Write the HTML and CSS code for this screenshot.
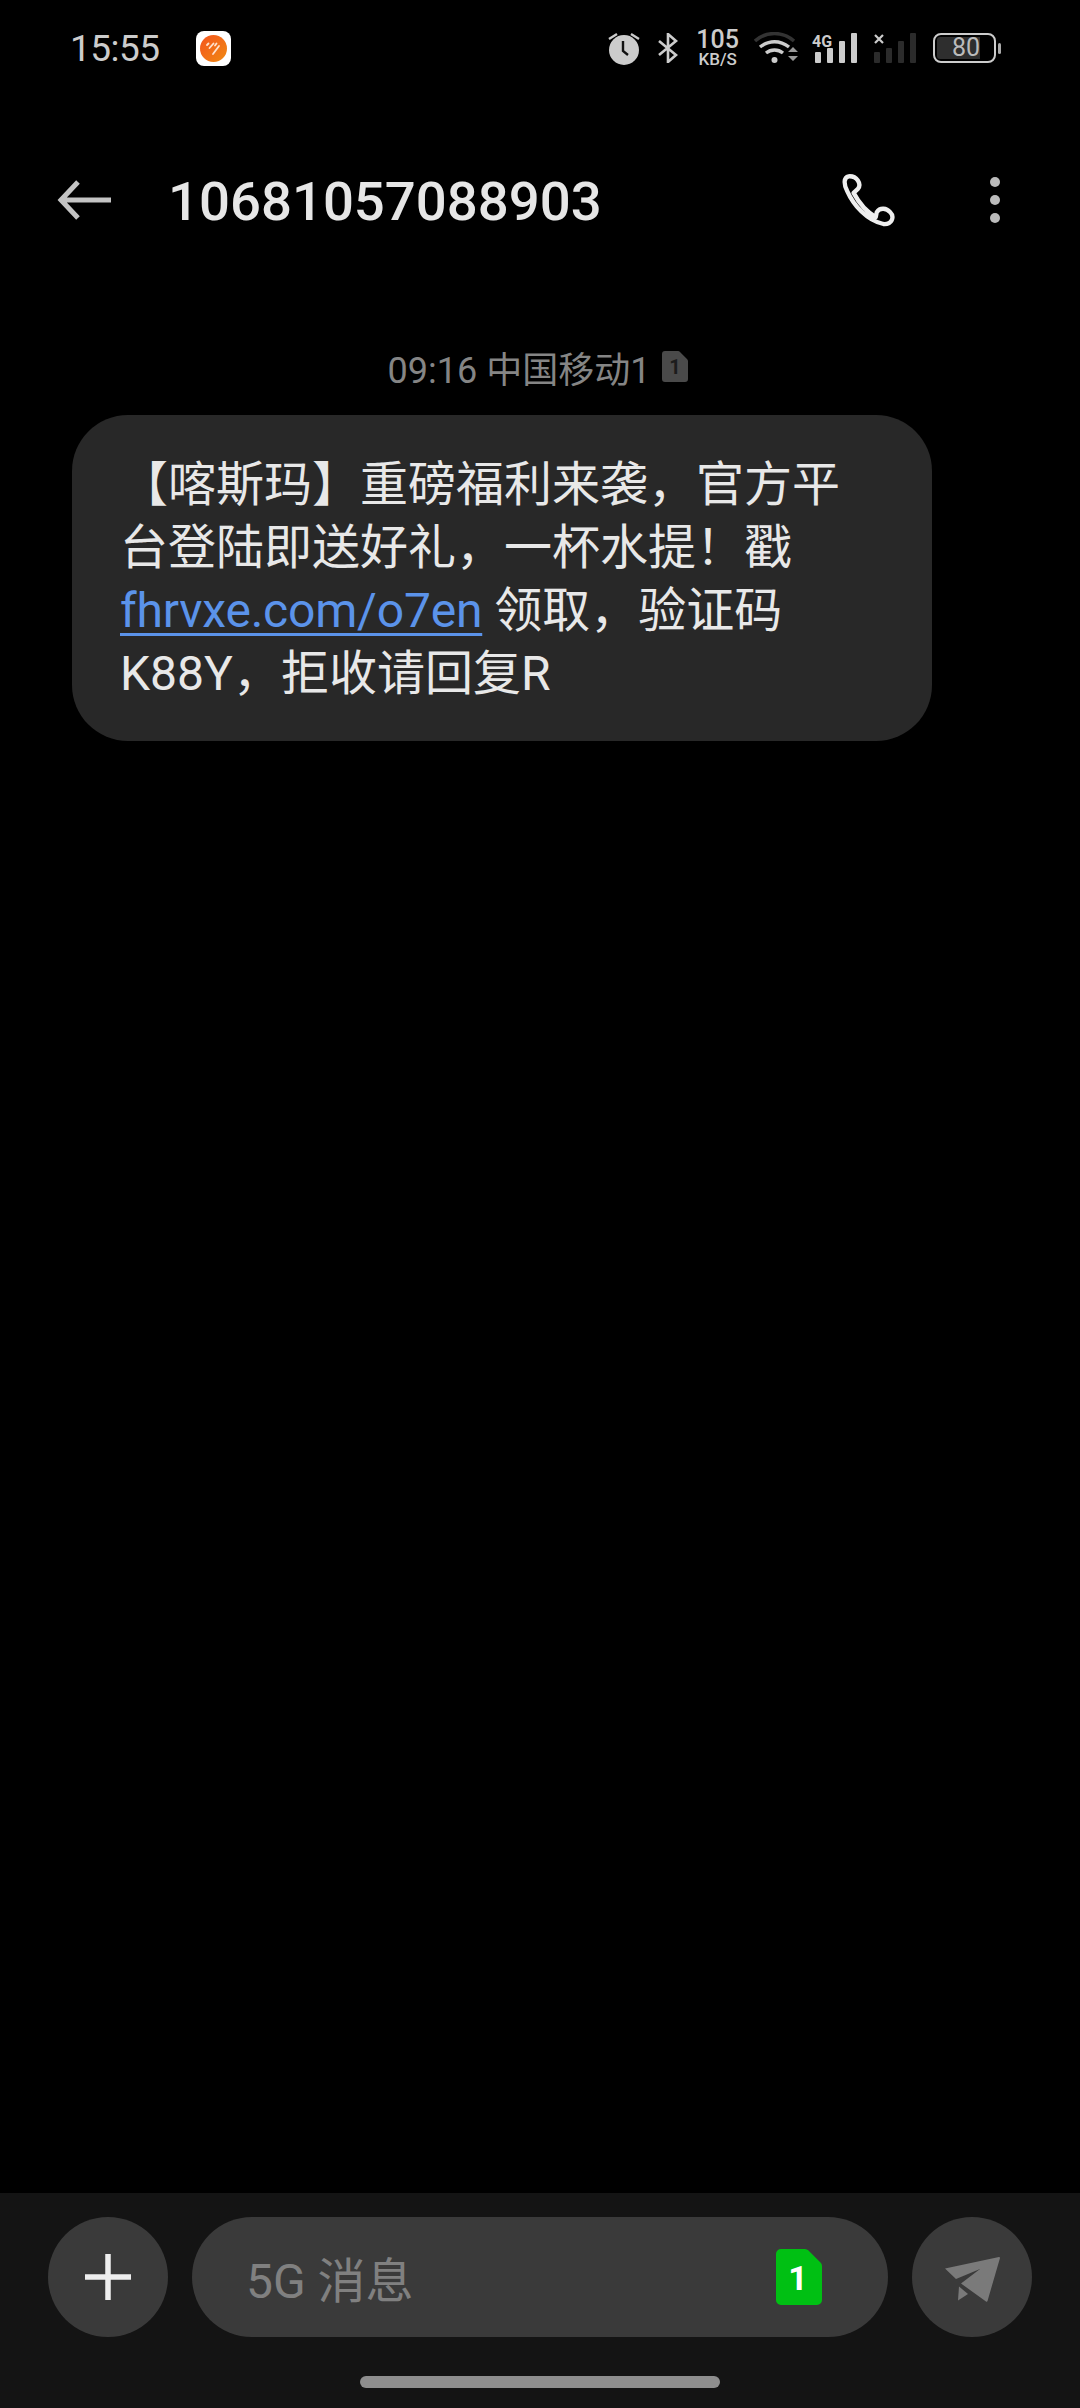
FILE: index.html
```html
<!DOCTYPE html>
<html lang="zh-CN">
<head>
<meta charset="utf-8">
<title>10681057088903</title>
<link rel="stylesheet" href="styles.css">
</head>
<body>
<div class="screen">
  <div class="status">
    <span class="time">15:55</span>
    <svg class="app-icon" viewBox="0 0 35 35">
      <rect width="35" height="35" rx="8" fill="#fff"/>
      <defs><linearGradient id="ag" x1="0" y1="0" x2="1" y2="1"><stop offset="0" stop-color="#f4541f"/><stop offset="1" stop-color="#f08a12"/></linearGradient></defs>
      <circle cx="17.500" cy="17.500" r="13.500" fill="url(#ag)"/>
      <path d="M11 14l1.500-1.500M13.500 17l4-4.500M19 14.500l1.500-2M17 23l6-8" stroke="#ffe2cf" stroke-width="1.800" stroke-linecap="round" fill="none"/>
    </svg>
    <div class="status-right">
      <svg class="ic-alarm" viewBox="0 0 32 33">
        <circle cx="16" cy="18" r="15" fill="#ccc"/>
        <path d="M15 9v10l5 4" stroke="#111" stroke-width="2.400" fill="none"/>
        <path d="M1 7l8-5M31 7l-8-5" stroke="#ccc" stroke-width="2.400" fill="none"/>
      </svg>
      <svg class="ic-bt" viewBox="0 0 20 30">
        <path d="M1 8l17 14-8 7V1l8 7L1 22" stroke="#ccc" stroke-width="2.600" fill="none"/>
      </svg>
      <div class="speed"><span class="speed-num">105</span><span class="speed-unit">KB/S</span></div>
      <svg class="ic-wifi" viewBox="0 0 44 32">
        <path d="M1 9C12-1 29-1 40 9" stroke="#333" stroke-width="3.400" fill="none"/>
        <path d="M6 15c9-7 20-7 29 0M12 21c5-4 12-4 17 0" stroke="#ccc" stroke-width="3.400" fill="none"/>
        <circle cx="20.500" cy="28" r="3" fill="#ccc"/>
        <path d="M34 20l5-5 5 5zM34 24h10l-5 5z" fill="#999"/>
      </svg>
      <svg class="ic-signal" viewBox="0 0 46 31">
        <text class="sig-label" x="0" y="14">4G</text>
        <rect x="3" y="19" width="6" height="11" rx="1" fill="#ccc"/>
        <rect x="15" y="15" width="6" height="15" rx="1" fill="#ccc"/>
        <rect x="27" y="8" width="6" height="22" rx="1" fill="#ccc"/>
        <rect x="39" y="0" width="6" height="30" rx="1" fill="#ccc"/>
      </svg>
      <svg class="ic-signal" viewBox="0 0 46 31">
        <path d="M2 2l8 8M10 2l-8 8" stroke="#ccc" stroke-width="2.200"/>
        <rect x="1" y="19" width="6" height="11" rx="1" fill="#2b2b2b"/>
        <rect x="13" y="15" width="6" height="15" rx="1" fill="#2b2b2b"/>
        <rect x="25" y="8" width="6" height="22" rx="1" fill="#2b2b2b"/>
        <rect x="37" y="0" width="6" height="30" rx="1" fill="#2b2b2b"/>
      </svg>
      <div class="battery">
        <div class="battery-body"><span class="battery-fill">80</span></div>
        <span class="battery-nub"></span>
      </div>
    </div>
  </div>

  <header class="topbar">
    <svg class="ic-back" viewBox="0 0 54 40">
      <path d="M54 20H4M21 2L4 20 21 38" stroke="#c4c4c4" stroke-width="5" fill="none"/>
    </svg>
    <h1 class="title">10681057088903</h1>
    <svg class="ic-phone" viewBox="130 75 160 160">
      <path d="M150 82C135 85 135 105 145 125C165 170 205 215 255 226C280 228 290 205 275 190C265 178 245 175 235 190L232 205C205 190 180 160 165 132L178 120C190 105 175 80 150 82Z" stroke="#eee" stroke-width="13" fill="none" stroke-linejoin="round"/>
    </svg>
    <div class="more"><span></span><span></span><span></span></div>
  </header>

  <main class="thread">
    <div class="stamp">
      <span>09:16 中国移动1</span>
      <svg class="ic-sim-small" viewBox="0 0 26 31">
        <path d="M3 0h13a3 3 0 0 1 2 1l7 7a3 3 0 0 1 1 2v18a3 3 0 0 1-3 3H3a3 3 0 0 1-3-3V3a3 3 0 0 1 3-3z" fill="#4a4a4a"/>
        <text class="sim-small-num" x="13" y="23">1</text>
      </svg>
    </div>
    <div class="bubble">【喀斯玛】重磅福利来袭，官方平台登陆即送好礼，一杯水提！戳 <a class="link">fhrvxe.com/o7en</a> 领取，验证码 K88Y，拒收请回复R</div>
  </main>

  <footer class="composer">
    <div class="composer-row">
      <div class="round-btn">
        <svg class="ic-plus" viewBox="0 0 46 46"><path d="M23 0v46M0 23h46" stroke="#eee" stroke-width="5.500"/></svg>
      </div>
      <div class="input">
        <span class="placeholder">5G 消息</span>
        <svg class="ic-sim" viewBox="0 0 46 56">
          <path d="M5 0h24a5 5 0 0 1 3.500 1.500L44.500 13.500A5 5 0 0 1 46 17v34a5 5 0 0 1-5 5H5a5 5 0 0 1-5-5V5a5 5 0 0 1 5-5z" fill="#00c013"/>
          <text class="sim-num" x="22" y="41">1</text>
        </svg>
      </div>
      <div class="round-btn">
        <svg class="ic-send" viewBox="0 0 56 46">
          <path d="M55 1L1 12.500 12 23 36 13 17 27.500 42 45.500a1 1 0 0 0 1.500-.5L56 2a1 1 0 0 0-1-1z" fill="#7a7a7a"/>
          <path d="M15 30.500L24 38 14 44.500z" fill="#7a7a7a"/>
        </svg>
      </div>
    </div>
    <div class="home-bar"></div>
  </footer>
</div>
</body>
</html>
```
FILE: styles.css
```css
* { box-sizing: border-box; }
html, body { margin: 0; padding: 0; background: #000; }
.screen {
  width: 1080px;
  height: 2408px;
  display: flex;
  flex-direction: column;
  background: #000;
  font-family: Roboto, "Noto Sans CJK SC", sans-serif;
  color: #eee;
}

/* status bar */
.status {
  height: 96px;
  display: flex;
  align-items: center;
  padding: 0 79px 0 70px;
}
.time { font-size: 37px; color: #ccc; letter-spacing: -0.5px; }
.app-icon { width: 35px; height: 35px; margin-left: 36px; }
.status-right { margin-left: auto; display: flex; align-items: center; }
.ic-alarm { width: 32px; height: 33px; margin-right: 18px; }
.ic-bt { width: 20px; height: 30px; margin-right: 18px; }
.speed { display: flex; flex-direction: column; align-items: center; margin-right: 15px; font-weight: 500; color: #ccc; }
.speed-num { font-size: 25px; line-height: 22px; }
.speed-unit { font-size: 17px; line-height: 16px; }
.ic-wifi { width: 44px; height: 32px; margin-right: 14px; }
.ic-signal { width: 46px; height: 31px; margin-right: 15px; }
.ic-signal + .ic-signal { margin-right: 14px; }
.sig-label { font-size: 16px; font-weight: 700; fill: #ccc; font-family: Roboto, sans-serif; }
.battery { display: flex; align-items: center; gap: 2px; }
.battery-body { width: 63px; height: 30px; border: 2px solid #ccc; border-radius: 8px; padding: 2px; display: flex; }
.battery-fill { width: 43px; background: #2e2e2e; color: #bbb; font-size: 25px; line-height: 22px; text-align: right; border-radius: 3px 0 0 3px; }
.battery-nub { width: 3px; height: 11px; background: #aaa; border-radius: 2px; }

/* header */
.topbar {
  height: 208px;
  display: flex;
  align-items: center;
  padding: 0 0 0 57px;
}
.ic-back { width: 54px; height: 40px; flex: none; }
.title { margin: 2px 0 0 57px; font-size: 54.500px; font-weight: 500; color: #e6e6e6; line-height: 64px; flex: 1; }
.ic-phone { width: 53px; height: 53px; flex: none; margin-right: 95px; }
.more { display: flex; flex-direction: column; gap: 8px; margin-right: 80px; flex: none; }
.more span { width: 10px; height: 10px; border-radius: 50%; background: #bbb; }

/* thread */
.thread { flex: 1; padding-top: 44px; }
.stamp { display: flex; align-items: center; justify-content: center; gap: 12px; height: 38px; padding-right: 4px; font-size: 36px; color: #858585; }
.ic-sim-small { width: 26px; height: 31px; margin-top: -2px; }
.sim-small-num { font-size: 20px; font-weight: 700; fill: #1c1c1c; text-anchor: middle; font-family: Roboto, sans-serif; }
.bubble {
  width: 860px;
  margin: 29px 0 0 72px;
  padding: 38px 48px 36px;
  background: #282828;
  border-radius: 56px;
  font-size: 48px;
  line-height: 63px;
  color: #e8e8e8;
}
.link { color: #5b93ea; letter-spacing: -0.2px; text-decoration: underline; text-underline-offset: 6px; text-decoration-thickness: 3px; }

/* composer */
.composer { height: 215px; background: #141414; padding-top: 24px; display: flex; flex-direction: column; align-items: center; }
.composer-row { display: flex; align-items: center; gap: 24px; }
.round-btn { width: 120px; height: 120px; border-radius: 50%; background: #3a3a3a; display: flex; align-items: center; justify-content: center; }
.ic-plus { width: 46px; height: 46px; }
.ic-send { width: 56px; height: 46px; margin-top: 4px; }
.input { width: 696px; height: 120px; border-radius: 60px; background: #3a3a3a; display: flex; align-items: center; justify-content: space-between; padding: 0 66px 0 54px; }
.placeholder { font-size: 48px; color: #808080; }
.ic-sim { width: 46px; height: 56px; }
.sim-num { font-size: 34px; font-weight: 700; fill: #fff; text-anchor: middle; font-family: Roboto, sans-serif; }
.home-bar { width: 360px; height: 12px; border-radius: 6px; background: #8e8e8e; margin-top: 39px; }
```
